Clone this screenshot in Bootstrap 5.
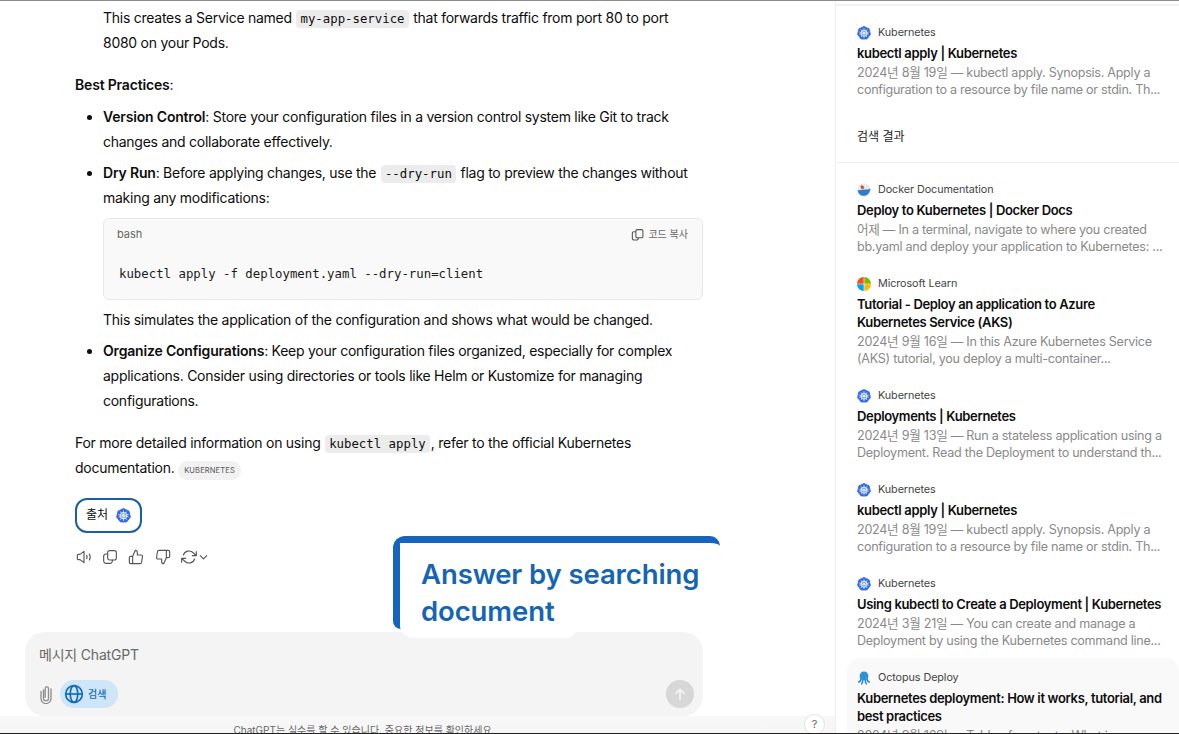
<!DOCTYPE html>
<html lang="ko">
<head>
    <meta charset="UTF-8">
    <meta name="viewport" content="width=device-width, initial-scale=1.0">
    <title>ChatGPT</title>
    <link href="https://cdn.jsdelivr.net/npm/bootstrap@5.3.2/dist/css/bootstrap.min.css" rel="stylesheet">
    <style>
        html, body { height: 100%; overflow: hidden; }
        body { background: #fff; color: #0d0d0d; font-family: Inter, "Noto Sans CJK KR", sans-serif; }
        .app { height: 734px; border-top: 1px solid #8c8c8c; border-bottom: 1.5px solid #222; position: relative; overflow: hidden; }
        .chat-col { width: 835px; flex: none; }
        .chat-scroll { padding: 4px 132px 0 75px; font-size: 14px; letter-spacing: -.26px; line-height: 25px; overflow: hidden; }
        .chat-scroll p { margin: 0; }
        .chat-scroll .para-gap { margin-top: 17px; }
        .chat-scroll ul { margin: 7px 0 0; padding-left: 28px; }
        .chat-scroll li { margin-top: 6px; }
        .chat-scroll li:first-child { margin-top: 0; }
        .chat-scroll strong { font-weight: 600; letter-spacing: -.18px; }
        .mono { font-family: "DejaVu Sans Mono", monospace; font-size: 12.35px; letter-spacing: 0; line-height: 1; }
        code.mono { color: #0d0d0d; background: #ececec; border-radius: 4px; padding: 2px 4px; margin: 0 1px; }
        .code-box { margin: 7.5px 0 7.5px; height: 82px; background: #f9f9f9; border: 1px solid #e8e8e8; border-radius: 6px; padding: 0 14px 0 13px; }
        .code-head { height: 31px; font-size: 11px; letter-spacing: 0; color: #666; padding-top: 1px; }
        .code-head span { font-size: 10px; }
        code.code-line { display: block; background: none; padding: 0; margin: 14px 0 0 2px; line-height: 20px; color: #1a1a1a; }
        .cite-pill { display: inline-block; background: #f2f2f2; color: #555; border-radius: 10px; font-size: 7.5px; letter-spacing: .15px; line-height: 19px; padding: 0 6px; margin-left: 0; }
        .source-btn { width: 67px; height: 35px; margin-top: 17.5px; border: 2px solid #1a5fa8; border-radius: 12px; font-size: 12px; background: #fff; color: #0d0d0d; padding: 0; }
        .msg-actions { margin-top: 14px; height: 20px; gap: 10.2px; margin-left: 1px; color: #555; }
        .msg-actions svg { width: 16px; height: 16px; fill: none; stroke: currentColor; stroke-width: 1.7; stroke-linecap: round; stroke-linejoin: round; }
        .msg-actions svg.chev { width: 11px; margin-left: 1px; stroke-width: 2.4; }
        .composer { width: 678px; height: 84px; margin-left: 25px; background: #f4f4f4; border-radius: 20px; padding: 13px 9px 8px 13px; flex: none; }
        .composer-input { font-size: 14px; letter-spacing: -.2px; padding-left: 1px; color: #686868; line-height: 20px; }
        .search-pill { height: 28px; margin-left: 2px; background: #cfe5f8; color: #0f6cbd; border-radius: 14px; padding: 0 12px 0 4px; font-size: 10px; gap: 4px; font-weight: 500; }
        .send-btn { width: 28px; height: 28px; background: #d7d7d7; border-radius: 50%; }
        .foot-note { flex: none; height: 17px; overflow: hidden; padding-top: 5px; width: 728px; font-size: 10px; line-height: 18px; color: #666; text-align: center; }
        .chat-fade { background: linear-gradient(#fff, #f6f6f6); }
        .help-dot { position: absolute; left: 804px; top: 713px; width: 21px; height: 21px; border: 1px solid #e3e3e3; border-radius: 50%; font-size: 11px; line-height: 19px; text-align: center; color: #666; background: #fff; }
        .side-col { width: 344px; flex: none; border-left: 1.5px solid #eee; overflow: hidden; }
        .side-band { height: 2px; margin: 3px 0 7px; background: #f1f1f1; }
        .side-head { padding: 20px 0 15px 21px; font-size: 12px; line-height: 20px; color: #222; border-bottom: 1.5px solid #eee; margin-bottom: 7px; }
        .src-item { margin-left: 11px; padding: 10px 10px 9.5px; border-radius: 14px 14px 0 0; }
        .src-item.hovered { background: #f9f9f9; }
        .src-label { height: 20px; font-size: 10.8px; letter-spacing: -.08px; color: #444; gap: 7px; }
        .src-label svg { width: 14px; height: 14px; flex: none; }
        .src-title { margin-top: 1px; max-width: 306px; font-size: 13px; letter-spacing: -.34px; line-height: 18px; font-weight: 600; color: #0d0d0d; }
        .src-text { margin-top: 1.5px; font-size: 12.6px; letter-spacing: -.28px; line-height: 17px; color: #8a8a8a; }
        .note-callout { position: absolute; left: 393px; top: 535px; width: 327px; height: 93px; border-top: 7px solid #1565c0; border-left: 7px solid #1565c0; border-radius: 12px 10px 0 8px; }
        .note-text { width: 178px; height: 95px; background: #fff; border-radius: 0 0 14px 14px; position: relative; }
        .note-label { position: absolute; left: 21px; top: 13px; width: 295px; font-size: 27.5px; letter-spacing: -.1px; line-height: 37px; font-weight: 600; color: #1565b4; }
    </style>
</head>
<body>
    <svg width="0" height="0" class="position-absolute">
        <symbol id="kube" viewBox="0 0 24 24">
            <path d="M12 .8 20.8 5l2.2 9.6-6.100 7.700H7.100L1 14.600 3.200 5z" fill="#326ce5" stroke="#326ce5" stroke-width="1.500" stroke-linejoin="round"/>
            <circle cx="12" cy="12.300" r="5.200" fill="none" stroke="#fff" stroke-width="1.500"/>
            <path d="M12 4.500v15.500M4.500 10.500l15 3.600M19.500 10.500l-15 3.600M7.200 6.300l9.600 12M16.800 6.300l-9.600 12" stroke="#fff" stroke-width="1.100" stroke-linecap="round"/>
        </symbol>
    </svg>

    <div class="app d-flex">
        <div class="chat-col d-flex flex-column">
            <div class="chat-scroll flex-grow-1">
                <p class="ms-4 ps-1">This creates a Service named <code class="mono">my-app-service</code> that forwards traffic from port 80 to port 8080 on your Pods.</p>
                <p class="para-gap"><strong>Best Practices</strong>:</p>
                <ul>
                    <li><strong>Version Control</strong>: Store your configuration files in a version control system like Git to track changes and collaborate effectively.</li>
                    <li><strong>Dry Run</strong>: Before applying changes, use the <code class="mono">--dry-run</code> flag to preview the changes without making any modifications:
                        <div class="code-box">
                            <div class="code-head d-flex justify-content-between align-items-center">
                                bash
                                <span class="d-flex align-items-center gap-1">
                                    <svg width="13" height="13" viewBox="0 0 24 24" fill="none" stroke="#555" stroke-width="2" stroke-linejoin="round"><rect x="9" y="3" width="13" height="15" rx="2.500"/><path d="M9 7H5a2.500 2.500 0 0 0-2.500 2.500v10A2.500 2.500 0 0 0 5 22h6a2.500 2.500 0 0 0 2.500-2.500V18"/></svg>
                                    코드 복사
                                </span>
                            </div>
                            <code class="mono code-line">kubectl apply -f deployment.yaml --dry-run=client</code>
                        </div>
                        This simulates the application of the configuration and shows what would be changed.
                    </li>
                    <li><strong>Organize Configurations</strong>: Keep your configuration files organized, especially for complex applications. Consider using directories or tools like Helm or Kustomize for managing configurations.</li>
                </ul>
                <p class="para-gap">For more detailed information on using <code class="mono">kubectl apply</code>, refer to the official Kubernetes documentation. <span class="cite-pill">KUBERNETES</span></p>
                <button type="button" class="source-btn btn d-flex align-items-center justify-content-center gap-2">출처 <svg width="15" height="15"><use href="#kube"/></svg></button>
                <div class="msg-actions d-flex align-items-center">
                    <svg viewBox="0 0 24 24"><path d="M12 3.500v17l-6-4.500H3.500a1.500 1.500 0 0 1-1.500-1.500v-5A1.500 1.500 0 0 1 3.500 8H6zM16 9.500c1 1.500 1 3.500 0 5M20 7.500c1.600 2.700 1.600 6.300 0 9"/></svg>
                    <svg viewBox="0 0 24 24"><rect x="8.500" y="2.500" width="13" height="14" rx="3"/><path d="M8.500 7.500H6A3.500 3.500 0 0 0 2.500 11v7A3.500 3.500 0 0 0 6 21.500h6a3.500 3.500 0 0 0 3.500-3.500v-1.500"/></svg>
                    <svg viewBox="0 0 24 24"><path d="M14 9V5a3 3 0 0 0-3-3l-4 9v11h11.280a2 2 0 0 0 2-1.700l1.380-9a2 2 0 0 0-2-2.300zM7 22H4a2 2 0 0 1-2-2v-7a2 2 0 0 1 2-2h3"/></svg>
                    <svg viewBox="0 0 24 24"><path d="M10 15v4a3 3 0 0 0 3 3l4-9V2H5.720a2 2 0 0 0-2 1.700l-1.380 9a2 2 0 0 0 2 2.300zm7-13h2.670A2.310 2.310 0 0 1 22 4v7a2.310 2.310 0 0 1-2.330 2H17"/></svg>
                    <span class="d-flex align-items-center">
                        <svg viewBox="0 0 24 24"><path d="M23 4v6h-6M1 20v-6h6M3.510 9a9 9 0 0 1 14.850-3.360L23 10M1 14l4.640 4.360A9 9 0 0 0 20.490 15"/></svg>
                        <svg viewBox="0 0 24 24" class="chev"><path d="M5 9l7 7 7-7"/></svg>
                    </span>
                </div>
            </div>
            <div class="chat-fade">
                <div class="bg-white">
                    <div class="composer d-flex flex-column justify-content-between">
                        <div class="composer-input">메시지 ChatGPT</div>
                        <div class="d-flex align-items-center justify-content-between">
                            <div class="d-flex align-items-center gap-1">
                                <svg width="16" height="20" viewBox="0 0 16 24" fill="none" stroke="#8e8e8e" stroke-width="1.600" stroke-linecap="round"><path d="M5 7v10a3 3 0 0 0 6 0V5.500a2 2 0 0 0-4 0V16M2 9v8.500a6 6 0 0 0 12 0V6"/></svg>
                                <div class="search-pill d-flex align-items-center">
                                    <svg width="20" height="20" viewBox="0 0 24 24" fill="none" stroke="#0f6cbd" stroke-width="2"><circle cx="12" cy="12" r="10"/><ellipse cx="12" cy="12" rx="4.500" ry="10"/><path d="M2 12h20"/></svg>
                                    검색
                                </div>
                            </div>
                            <div class="send-btn d-flex align-items-center justify-content-center">
                                <svg width="14" height="14" viewBox="0 0 24 24" fill="none" stroke="#f4f4f4" stroke-width="3" stroke-linecap="round" stroke-linejoin="round"><path d="M12 21V4M5 11l7-7 7 7"/></svg>
                            </div>
                        </div>
                    </div>
                </div>
                <div class="foot-note">ChatGPT는 실수를 할 수 있습니다. 중요한 정보를 확인하세요.</div>
            </div>
        </div>

        <div class="side-col">
            <div class="side-band"></div>
            <div class="src-item">
                <div class="src-label d-flex align-items-center"><svg><use href="#kube"/></svg>Kubernetes</div>
                <div class="src-title">kubectl apply | Kubernetes</div>
                <div class="src-text">2024년 8월 19일 — kubectl apply. Synopsis. Apply a configuration to a resource by file name or stdin. Th...</div>
            </div>
            <div class="side-head">검색 결과</div>
            <div class="src-item">
                <div class="src-label d-flex align-items-center">
                    <svg viewBox="0 0 24 24"><circle cx="12" cy="12" r="11.500" fill="#e6ebf0"/><path d="M1 12c3 1 5 0 6-.5l10-.5c2 0 4-.5 6-1.500-.5 7-5 12.500-11 12.500S2 18 1 12z" fill="#2f7fc8"/><path d="M6 5c3-1.500 5 0 6 2 1 1 0 3-1 3H7z" fill="#d9442e"/></svg>
                    Docker Documentation
                </div>
                <div class="src-title">Deploy to Kubernetes | Docker Docs</div>
                <div class="src-text">어제 — In a terminal, navigate to where you created bb.yaml and deploy your application to Kubernetes: ...</div>
            </div>
            <div class="src-item">
                <div class="src-label d-flex align-items-center">
                    <svg viewBox="0 0 24 24"><path d="M11.500 11.500V0A11.500 11.500 0 0 0 0 11.500z" fill="#f25022"/><path d="M12.500 11.500V0A11.500 11.500 0 0 1 24 11.500z" fill="#7fba00"/><path d="M11.500 12.500V24A11.500 11.500 0 0 1 0 12.500z" fill="#00a4ef"/><path d="M12.500 12.500V24A11.500 11.500 0 0 0 24 12.500z" fill="#ffb900"/></svg>
                    Microsoft Learn
                </div>
                <div class="src-title">Tutorial - Deploy an application to Azure Kubernetes Service (AKS)</div>
                <div class="src-text">2024년 9월 16일 — In this Azure Kubernetes Service (AKS) tutorial, you deploy a multi-container...</div>
            </div>
            <div class="src-item">
                <div class="src-label d-flex align-items-center"><svg><use href="#kube"/></svg>Kubernetes</div>
                <div class="src-title">Deployments | Kubernetes</div>
                <div class="src-text">2024년 9월 13일 — Run a stateless application using a Deployment. Read the Deployment to understand th...</div>
            </div>
            <div class="src-item">
                <div class="src-label d-flex align-items-center"><svg><use href="#kube"/></svg>Kubernetes</div>
                <div class="src-title">kubectl apply | Kubernetes</div>
                <div class="src-text">2024년 8월 19일 — kubectl apply. Synopsis. Apply a configuration to a resource by file name or stdin. Th...</div>
            </div>
            <div class="src-item">
                <div class="src-label d-flex align-items-center"><svg><use href="#kube"/></svg>Kubernetes</div>
                <div class="src-title">Using kubectl to Create a Deployment | Kubernetes</div>
                <div class="src-text">2024년 3월 21일 — You can create and manage a Deployment by using the Kubernetes command line...</div>
            </div>
            <div class="src-item hovered">
                <div class="src-label d-flex align-items-center">
                    <svg viewBox="0 0 24 24"><circle cx="12" cy="8.500" r="7.500" fill="#2f8fd8"/><path d="M7 12c0 4-1 6-4 7M10 14c0 3-.5 6-2 8M14 14c0 3 .5 6 2 8M17 12c0 4 1 6 4 7" fill="none" stroke="#2f8fd8" stroke-width="2.800" stroke-linecap="round"/></svg>
                    Octopus Deploy
                </div>
                <div class="src-title">Kubernetes deployment: How it works, tutorial, and best practices</div>
                <div class="src-text">2024년 9월 16일 — Table of contents. What is a Kubernetes deployment...</div>
            </div>
        </div>

        <div class="help-dot">?</div>
        <div class="note-callout">
            <div class="note-text"></div>
            <div class="note-label">Answer by searching document</div>
        </div>
    </div>

    <script src="https://cdn.jsdelivr.net/npm/bootstrap@5.3.2/dist/js/bootstrap.bundle.min.js"></script>
</body>
</html>
